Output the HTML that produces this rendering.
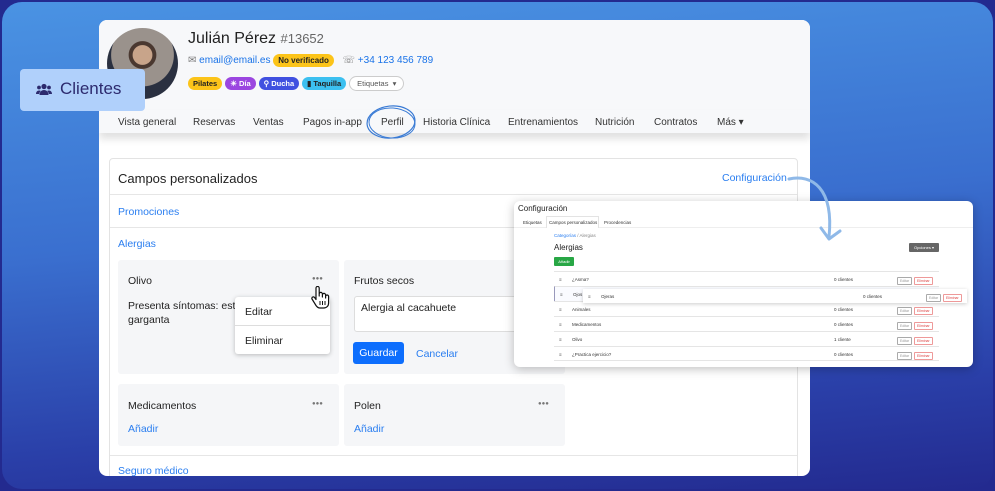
<!DOCTYPE html>
<html><head><meta charset="utf-8"><style>
*{box-sizing:border-box;margin:0;padding:0}
body{width:995px;height:491px;overflow:hidden;background:#232a8f;font-family:"Liberation Sans",Arial,sans-serif;position:relative}
.frame{position:absolute;left:2px;top:2px;width:991px;height:487px;border-radius:20px;background:linear-gradient(175deg,#4a93e3 0%,#3a6fcf 45%,#2a3fa8 80%,#232a8f 100%)}
.card{position:absolute;left:99px;top:20px;width:711px;height:456px;background:#fff;border-radius:8px;overflow:hidden}
.hdr{position:absolute;left:0;top:0;width:711px;height:113px;background:#f7f8fa}
.tabs{position:absolute;left:0;top:90px;width:711px;height:23px;background:#f7f8fa;box-shadow:0 6px 8px rgba(0,0,0,.12)}
.tab{position:absolute;top:7px;font-size:10px;color:#333}
.av{position:absolute;left:8px;top:8px;width:71px;height:71px;border-radius:50%;background:radial-gradient(circle at 50% 38%,#c8a48a 0 17%,#4a3830 18% 24%,#9a928c 25% 55%,#2a3040 56%)}
.name{position:absolute;left:89px;top:10px;font-size:16px;color:#222}
.name span{color:#666;font-size:13px}
.row{position:absolute;left:89px;font-size:10px}
a{color:#1a73e8}
.b{display:inline-block;border-radius:8px;font-size:7.5px;font-weight:bold;padding:2px 5px;margin-right:3px;vertical-align:middle}
.sec{position:absolute;left:10px;top:138px;width:689px;height:330px;border:1px solid #e3e3e3;border-radius:4px}
.ln{position:absolute;left:0;width:100%;height:1px;background:#e6e6e6}
.lnk{position:absolute;color:#2a7ef0;font-size:10.5px}
.box{position:absolute;background:#f5f6f8;border-radius:3px}
.t{position:absolute;font-size:10.5px;color:#222}
.dots{position:absolute;font-size:6px;color:#777;letter-spacing:0px}
.cli{position:absolute;left:20px;top:69px;width:125px;height:42px;background:#b0d0fb;border-radius:4px;color:#2c2a6e;font-size:17px}
.conf{position:absolute;left:514px;top:201px;width:459px;height:166px;background:#fff;border-radius:6px;box-shadow:0 2px 10px rgba(0,0,0,.25);font-size:4.5px;color:#333}
.tr{position:absolute;left:40px;width:385px;height:15px;border-top:1px solid #e5e5e5;font-size:4.5px}
.tr span{position:absolute;top:5px}
.be{position:absolute;top:3px;border:1px solid #aaa;border-radius:1px;color:#999;padding:1px 2px;font-size:3.5px}
.bd{position:absolute;top:3px;border:1px solid #e99;border-radius:1px;color:#d44;padding:1px 2px;font-size:3.5px}
</style></head><body>
<div class="frame"></div>
<div class="card">
 <div class="hdr"></div>
 <div class="av"></div>
 <div class="name">Julián Pérez <span>#13652</span></div>
 <div class="row" style="top:34px"><span style="color:#777">✉</span> <a>email@email.es</a> <span class="b" style="background:#fcc419;color:#222;font-size:8px">No verificado</span> &nbsp;<span style="color:#777">☏</span> <a>+34 123 456 789</a></div>
 <div class="row" style="top:56px"><span class="b" style="background:#fcc419;color:#222">Pilates</span><span class="b" style="background:#9b46e0;color:#fff">☀ Día</span><span class="b" style="background:#4050e0;color:#fff">⚲ Ducha</span><span class="b" style="background:#3cc0f0;color:#222">▮ Taquilla</span><span class="b" style="background:#fff;border:1px solid #ccc;color:#555;font-weight:normal;padding:2px 7px">Etiquetas &nbsp;▾</span></div>
 <div class="tabs">
  <span class="tab" style="left:19px">Vista general</span><span class="tab" style="left:94px">Reservas</span><span class="tab" style="left:154px">Ventas</span><span class="tab" style="left:204px">Pagos in-app</span><span class="tab" style="left:282px">Perfil</span><span class="tab" style="left:324px">Historia Clínica</span><span class="tab" style="left:409px">Entrenamientos</span><span class="tab" style="left:496px">Nutrición</span><span class="tab" style="left:555px">Contratos</span><span class="tab" style="left:618px">Más ▾</span>
 </div>
 <div class="sec">
  <div class="t" style="left:8px;top:12px;font-size:13px">Campos personalizados</div>
  <div class="lnk" style="left:612px;top:13px">Configuración</div>
  <div class="ln" style="top:35px"></div>
  <div class="lnk" style="left:8px;top:47px">Promociones</div>
  <div class="ln" style="top:68px"></div>
  <div class="lnk" style="left:8px;top:79px">Alergias</div>
  <div class="box" style="left:8px;top:101px;width:221px;height:114px"></div>
  <div class="t" style="left:18px;top:116px">Olivo</div><div class="dots" style="left:202px;top:117px">●●●</div>
  <div class="t" style="left:18px;top:140px;line-height:14px">Presenta síntomas: estorn<br>garganta</div>
  <div class="box" style="left:234px;top:101px;width:221px;height:114px"></div>
  <div class="t" style="left:244px;top:116px">Frutos secos</div>
  <div style="position:absolute;left:244px;top:137px;width:200px;height:36px;background:#fff;border:1px solid #ddd;border-radius:3px"></div>
  <div class="t" style="left:251px;top:143px">Alergia al cacahuete</div>
  <div style="position:absolute;left:243px;top:183px;width:51px;height:22px;background:#0d6efd;border-radius:3px;color:#fff;font-size:10.5px;text-align:center;line-height:22px">Guardar</div>
  <div class="lnk" style="left:306px;top:189px">Cancelar</div>
  <div class="box" style="left:8px;top:225px;width:221px;height:62px"></div>
  <div class="t" style="left:18px;top:241px">Medicamentos</div><div class="dots" style="left:202px;top:242px">●●●</div>
  <div class="lnk" style="left:18px;top:264px">Añadir</div>
  <div class="box" style="left:234px;top:225px;width:221px;height:62px"></div>
  <div class="t" style="left:244px;top:241px">Polen</div><div class="dots" style="left:428px;top:242px">●●●</div>
  <div class="lnk" style="left:244px;top:264px">Añadir</div>
  <div class="ln" style="top:296px"></div>
  <div class="lnk" style="left:8px;top:306px">Seguro médico</div>
 </div>
 <div style="position:absolute;left:136px;top:277px;width:95px;height:57px;background:#fff;border-radius:3px;box-shadow:0 1px 5px rgba(0,0,0,.25);font-size:10.5px;color:#222">
  <div style="position:absolute;left:10px;top:9px">Editar</div>
  <div style="position:absolute;left:0;top:28px;width:95px;height:1px;background:#ddd"></div>
  <div style="position:absolute;left:10px;top:38px">Eliminar</div>
 </div>
 <svg style="position:absolute;left:211px;top:266px" width="22" height="24" viewBox="0 0 22 24">
  <path d="M6 2 a1.6 1.6 0 0 1 3.2 0 V10 V8 a1.6 1.6 0 0 1 3.2 0 V11 V9 a1.6 1.6 0 0 1 3.2 0 V12 V10.5 a1.5 1.5 0 0 1 3 0 V17 c0 3-2 5-5 5 H10 c-2 0-3-1-4-2.5 L2 13 a1.5 1.5 0 0 1 2.5-1.6 L6 13.5 Z" fill="#fff" stroke="#111" stroke-width="1.2" stroke-linejoin="round"/>
  <path d="M10 15 v4 M12.5 15 v4 M15 15 v4" stroke="#111" stroke-width="1"/>
 </svg>
</div>
<div class="cli">
 <svg style="position:absolute;left:16px;top:14px" width="16" height="13" viewBox="0 0 16 13" fill="#2c2a6e">
  <circle cx="8" cy="3.5" r="2.6"/><circle cx="3" cy="4.5" r="1.9"/><circle cx="13" cy="4.5" r="1.9"/>
  <path d="M3.5 12 c0-3 2-5 4.5-5 s4.5 2 4.5 5z"/><path d="M0 11 c0-2 1.2-3.5 3-3.5 c.8 0 1.3.2 1.8.5 c-1 1-1.5 2-1.6 3z"/><path d="M16 11 c0-2-1.2-3.5-3-3.5 c-.8 0-1.3.2-1.8.5 c1 1 1.5 2 1.6 3z"/>
 </svg>
 <span style="position:absolute;left:40px;top:10px">Clientes</span></div>
<svg style="position:absolute;left:0;top:0" width="995" height="491">
 <ellipse cx="391" cy="122" rx="24" ry="16" fill="none" stroke="#3a7bd5" stroke-width="1.2" transform="rotate(-6 391 122)"/>
 <ellipse cx="392" cy="123" rx="23" ry="15" fill="none" stroke="#3a7bd5" stroke-width="1" transform="rotate(4 392 123)"/>
</svg>
<div class="conf">
 <div style="position:absolute;left:4px;top:3px;font-size:8px;color:#222">Configuración</div>
 <div style="position:absolute;left:0;top:26px;width:100%;height:1px;background:#eee"></div>
 <div style="position:absolute;left:9px;top:19px">Etiquetas</div>
 <div style="position:absolute;left:32px;top:15px;width:53px;height:12px;border:1px solid #e3e3e3;border-bottom:none;background:#fff"></div>
 <div style="position:absolute;left:35px;top:19px">Campos personalizados</div>
 <div style="position:absolute;left:90px;top:19px">Procedencias</div>
 <div style="position:absolute;left:40px;top:32px;color:#888"><span style="color:#2a7ef0">Categorías</span> / Alergias</div>
 <div style="position:absolute;left:40px;top:42px;font-size:8px;color:#222">Alergias</div>
 <div style="position:absolute;left:395px;top:42px;width:30px;height:9px;background:#666;border-radius:1px;color:#fff;font-size:4px;text-align:center;line-height:9px">Opciones ▾</div>
 <div style="position:absolute;left:40px;top:56px;width:20px;height:9px;background:#28a745;border-radius:1px;color:#fff;font-size:4px;text-align:center;line-height:9px">Añadir</div>
 <div class="tr" style="top:70px"><span style="left:5px">≡</span><span style="left:18px">¿Asma?</span><span style="left:280px">0 clientes</span><span class="be" style="left:343px">Editar</span><span class="bd" style="left:360px">Eliminar</span></div>
 <div class="tr" style="top:85px;border-left:1px solid #99b;background:#fafbff"><span style="left:5px">≡</span><span style="left:18px">Ojos</span></div>
 <div class="tr" style="top:100px"><span style="left:5px">≡</span><span style="left:18px">Animales</span><span style="left:280px">0 clientes</span><span class="be" style="left:343px">Editar</span><span class="bd" style="left:360px">Eliminar</span></div>
 <div class="tr" style="top:115px"><span style="left:5px">≡</span><span style="left:18px">Medicamentos</span><span style="left:280px">0 clientes</span><span class="be" style="left:343px">Editar</span><span class="bd" style="left:360px">Eliminar</span></div>
 <div class="tr" style="top:130px"><span style="left:5px">≡</span><span style="left:18px">Olivo</span><span style="left:280px">1 cliente</span><span class="be" style="left:343px">Editar</span><span class="bd" style="left:360px">Eliminar</span></div>
 <div class="tr" style="top:145px;border-bottom:1px solid #e5e5e5"><span style="left:5px">≡</span><span style="left:18px">¿Practica ejercicio?</span><span style="left:280px">0 clientes</span><span class="be" style="left:343px">Editar</span><span class="bd" style="left:360px">Eliminar</span></div>
 <div class="tr" style="top:88px;left:69px;width:384px;height:14px;background:#fff;box-shadow:0 1px 4px rgba(0,0,0,.2);border:none"><span style="left:5px">≡</span><span style="left:18px">Ojeras</span><span style="left:280px">0 clientes</span><span class="be" style="left:343px">Editar</span><span class="bd" style="left:360px">Eliminar</span></div>
</div>
<svg style="position:absolute;left:0;top:0" width="995" height="491">
 <path d="M789 179 C812 174 834 188 829 237" fill="none" stroke="#8fb9e8" stroke-width="3" stroke-linecap="round"/>
 <path d="M821 228 L829 239 L840 231" fill="none" stroke="#8fb9e8" stroke-width="3" stroke-linecap="round" stroke-linejoin="round"/>
</svg>
</body></html>
